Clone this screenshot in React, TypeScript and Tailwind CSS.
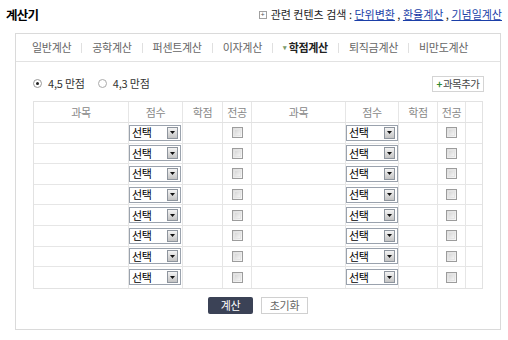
import React from "react";

const cols = "grid grid-cols-[95px_54px_40px_29px_94px_53px_39px_28px_18px]";

function Select() {
  return (
    <div className="flex h-[16px] w-[52px] items-center border border-[#9aa2ad] bg-white">
      <span className="flex-1 pl-[2px] text-[11px] leading-none tracking-[-0.3px] text-black">선택</span>
      <span className="mr-[2px] flex h-[12px] w-[11px] items-center justify-center border border-[#8e959e] bg-gradient-to-b from-[#f4f4f4] to-[#c4c4c4]">
        <svg width="5" height="3" viewBox="0 0 5 3"><path d="M0 0h5L2.5 3z" fill="#111" /></svg>
      </span>
    </div>
  );
}

function Check() {
  return (
    <span className="block h-[11px] w-[11px] border border-[#9c9c9c] bg-gradient-to-br from-[#dcdcdc] to-[#f8f8f8] p-[1px]">
      <span className="block h-full w-full border border-[#e4e4e4] bg-gradient-to-br from-[#d6d6d6] to-[#f4f4f4]" />
    </span>
  );
}

function Cell({ children, last, center = true }: { children?: React.ReactNode; last?: boolean; center?: boolean }) {
  return (
    <div className={`flex h-full items-center ${center ? "justify-center" : ""} ${last ? "" : "border-r border-[#e6e6e6]"}`}>
      {children}
    </div>
  );
}

function Tab({ label, active }: { label: string; active?: boolean }) {
  return (
    <span className={`flex items-center text-[11px] tracking-[-0.3px] ${active ? "font-bold text-[#222]" : "text-[#666]"}`}>
      {active && <span className="mr-[2px] text-[7px] text-[#7a9a6a]">▾</span>}
      {label}
    </span>
  );
}

function Sep() {
  return <span className="h-[10px] w-px bg-[#e0e0e0]" />;
}

export default function App() {
  const rows = Array.from({ length: 8 });
  return (
    <div className="h-[340px] w-[508px] bg-white font-['Noto_Sans_CJK_KR','Noto_Sans',sans-serif] text-[#333]">
      <div className="flex h-[33px] items-start justify-between pl-[6px] pr-[6px] pt-[7px]">
        <span className="text-[12.5px] font-bold leading-[15px] tracking-[-0.8px] text-black">계산기</span>
        <div className="flex items-center pt-[1px] text-[11px] leading-[13px] tracking-[0px]">
          <span className="mr-[4px] flex h-[8px] w-[8px] items-center justify-center border border-[#a0a0a0] text-[7px] leading-none text-[#555]">+</span>
          <span className="text-[#222]">관련 컨텐츠 검색 :&nbsp;</span>
          <span className="text-[#1b3fa8] underline">단위변환</span>
          <span className="text-[#222]">&nbsp;,&nbsp;</span>
          <span className="text-[#1b3fa8] underline">환율계산</span>
          <span className="text-[#222]">&nbsp;,&nbsp;</span>
          <span className="text-[#1b3fa8] underline">기념일계산</span>
        </div>
      </div>

      <div className="ml-[15px] h-[297px] w-[486px] border border-[#dadada]">
        <div className="flex h-[28px] items-center gap-[10px] border-b border-[#e2e2e2] pl-[16px]">
          <Tab label="일반계산" />
          <Sep />
          <Tab label="공학계산" />
          <Sep />
          <Tab label="퍼센트계산" />
          <Sep />
          <Tab label="이자계산" />
          <Sep />
          <Tab label="학점계산" active />
          <Sep />
          <Tab label="퇴직금계산" />
          <Sep />
          <Tab label="비만도계산" />
        </div>

        <div className="px-[17px]">
          <div className="flex h-[39px] items-center justify-between pt-[4px]">
            <div className="flex items-center text-[11px] tracking-[-0.2px] text-[#333]">
              <span className="mr-[6px] flex h-[9px] w-[9px] items-center justify-center rounded-full border border-[#999] bg-white">
                <span className="h-[3px] w-[3px] rounded-full bg-[#222]" />
              </span>
              <span>4,5 만점</span>
              <span className="ml-[13px] mr-[6px] h-[9px] w-[9px] rounded-full border border-[#aaa] bg-white" />
              <span>4,3 만점</span>
            </div>
            <div className="mr-[-1px] flex h-[16px] w-[52px] items-center justify-center border border-[#d4d4d4] bg-white text-[10.5px] tracking-[-0.5px] text-[#444]">
              <span className="mr-[1px] text-[10px] font-bold text-[#2f8a2f]">+</span>과목추가
            </div>
          </div>

          <div className="border border-[#e2e2e2]">
            <div className={`${cols} h-[21px] border-b border-[#e2e2e2] text-[11px] tracking-[-0.3px] text-[#888]`}>
              <Cell>과목</Cell>
              <Cell>점수</Cell>
              <Cell>학점</Cell>
              <Cell>전공</Cell>
              <Cell>과목</Cell>
              <Cell>점수</Cell>
              <Cell>학점</Cell>
              <Cell>전공</Cell>
              <Cell last />
            </div>
            {rows.map((_, i) => (
              <div key={i} className={`${cols} h-[20.6px] ${i < 7 ? "border-b border-[#e6e6e6]" : ""}`}>
                <Cell />
                <Cell center={false}><Select /></Cell>
                <Cell />
                <Cell><Check /></Cell>
                <Cell />
                <Cell center={false}><Select /></Cell>
                <Cell />
                <Cell><Check /></Cell>
                <Cell last />
              </div>
            ))}
          </div>

          <div className="mt-[8px] flex justify-center gap-[8px]">
            <span className="flex h-[17px] w-[45px] items-center justify-center rounded-[2px] bg-[#3b4256] text-[11px] tracking-[-0.3px] text-white">계산</span>
            <span className="flex h-[17px] w-[47px] items-center justify-center border border-[#d0d0d0] bg-white text-[11px] tracking-[-0.3px] text-[#666]">초기화</span>
          </div>
        </div>
      </div>
    </div>
  );
}
